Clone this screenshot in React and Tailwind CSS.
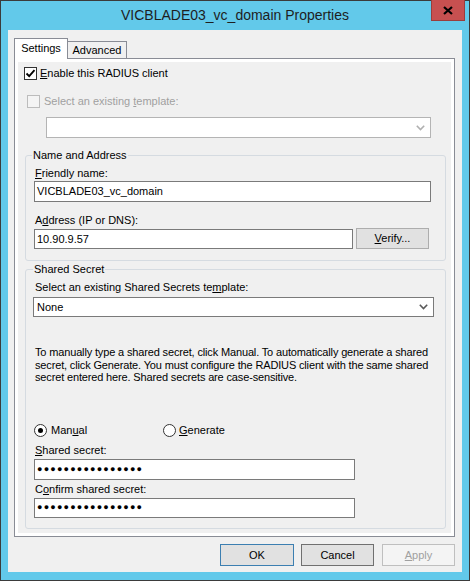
import React from "react";

const Check = ({ checked, disabled }) => (
  <span
    className={`flex h-[13px] w-[13px] shrink-0 items-center justify-center border ${
      disabled ? "border-[#bcbcbc] bg-[#f4f4f4]" : "border-[#333333] bg-white"
    }`}
  >
    {checked && (
      <svg width="11" height="11" viewBox="0 0 11 11">
        <path d="M1.5 5.5 L4.2 8.2 L9.5 2.2" fill="none" stroke="#000" strokeWidth="1.8" />
      </svg>
    )}
  </span>
);

const Radio = ({ checked }) => (
  <span className="flex h-[13px] w-[13px] shrink-0 items-center justify-center rounded-full border border-[#333333] bg-white">
    {checked && <span className="h-[5px] w-[5px] rounded-full bg-black" />}
  </span>
);

const Chevron = ({ color }) => (
  <svg width="9" height="6" viewBox="0 0 9 6">
    <path d="M0.8 0.8 L4.5 4.6 L8.2 0.8" fill="none" stroke={color} strokeWidth="1.6" />
  </svg>
);

const Dots = () => (
  <span className="text-[9px] tracking-[1.2px] text-black">●●●●●●●●●●●●●●●●</span>
);

export default function App() {
  return (
    <div className="flex h-[581px] w-[470px] flex-col border border-[#3b3b3b] bg-[#62c9ea] font-['Liberation_Sans',Arial,sans-serif] text-[11px] leading-[13px] text-black">
      {/* title bar */}
      <div className="relative flex h-[29px] shrink-0 items-center justify-center">
        <span className="text-[14px] text-[#1e1e1e]">VICBLADE03_vc_domain Properties</span>
        <div className="absolute right-[4px] top-[-1px] flex h-[21px] w-[34px] items-center justify-center border border-t-0 border-[#9a3d3d] bg-[#c75050]">
          <svg width="10" height="9" viewBox="0 0 10 9">
            <path d="M1 1 L9 8 M9 1 L1 8" stroke="#000" strokeWidth="2.2" />
          </svg>
        </div>
      </div>

      {/* client area */}
      <div className="mx-[7px] flex h-[542px] flex-col bg-[#f0f0f0] pl-[6px] pr-[7px] pt-[8px]">
        {/* tabs */}
        <div className="flex h-[21px] items-end">
          <div className="relative z-10 flex h-[21px] w-[54px] items-center justify-center border border-b-0 border-[#898c95] bg-white pb-[1px]">
            Settings
          </div>
          <div className="flex h-[18px] w-[59px] items-center justify-center border border-b-0 border-l-0 border-[#898c95] bg-[#f0f0f0]">
            Advanced
          </div>
        </div>

        {/* tab panel */}
        <div className="mt-[-1px] h-[479px] w-[441px] border border-[#898c95] bg-white p-[3px]">
          <div className="flex h-full flex-col bg-[#f0f0f0]">
            <div className="ml-[6px] mt-[5px] flex h-[13px] items-center">
              <Check checked />
              <span className="ml-[3px]">
                <span className="underline">E</span>nable this RADIUS client
              </span>
            </div>

            <div className="ml-[9px] mt-[15px] flex h-[13px] items-center">
              <Check disabled />
              <span className="ml-[4px] text-[#a0a0a0]">
                Select an existing <span className="underline">t</span>emplate:
              </span>
            </div>

            <div className="ml-[28px] mt-[9px] flex h-[21px] w-[385px] items-center justify-end border border-[#b4b4b4] bg-white pr-[5px]">
              <Chevron color="#b0b0b0" />
            </div>

            {/* Name and Address */}
            <div className="relative ml-[7px] mt-[17px] flex h-[106px] w-[421px] flex-col rounded-[3px] border border-[#d5dbe1] pl-[8px]">
              <span className="absolute left-[6px] top-[-7px] bg-[#f0f0f0] px-[1px]">Name and Address</span>
              <span className="ml-[1px] mt-[11px]">
                <span className="underline">F</span>riendly name:
              </span>
              <div className="mt-[1px] flex h-[21px] w-[397px] items-center border border-[#7a7a7a] bg-white pl-[2px]">
                VICBLADE03_vc_domain
              </div>
              <span className="ml-[1px] mt-[12px]">
                A<span className="underline">d</span>dress (IP or DNS):
              </span>
              <div className="mt-[1px] flex items-start">
                <div className="mt-[1px] flex h-[20px] w-[319px] items-center border border-[#7a7a7a] bg-white pl-[2px]">
                  10.90.9.57
                </div>
                <div className="ml-[3px] flex h-[21px] w-[73px] items-center justify-center border border-[#adadad] bg-[#e1e1e1]">
                  <span>
                    <span className="underline">V</span>erify...
                  </span>
                </div>
              </div>
            </div>

            {/* Shared Secret */}
            <div className="relative ml-[7px] mt-[8px] flex h-[260px] w-[421px] flex-col rounded-[3px] border border-[#d5dbe1] pl-[8px]">
              <span className="absolute left-[7px] top-[-7px] bg-[#f0f0f0] px-[1px]">Shared Secret</span>
              <span className="ml-[1px] mt-[11px]">
                Select an existing Shared Secrets te<span className="underline">m</span>plate:
              </span>
              <div className="-ml-[1px] mt-[3px] flex h-[20px] w-[401px] items-center justify-between border border-[#7a7a7a] bg-white pl-[3px] pr-[5px]">
                <span>None</span>
                <Chevron color="#5a5a5a" />
              </div>
              <p className="ml-[1px] mt-[29px] leading-[12.5px] tracking-[-0.15px]">
                To manually type a shared secret, click Manual. To automatically generate a shared
                <br />
                secret, click Generate. You must configure the RADIUS client with the same shared
                <br />
                secret entered here. Shared secrets are case-sensitive.
              </p>
              <div className="mt-[40px] flex h-[13px] items-center">
                <div className="flex w-[129px] items-center">
                  <Radio checked />
                  <span className="ml-[4px]">
                    Man<span className="underline">u</span>al
                  </span>
                </div>
                <div className="flex items-center">
                  <Radio />
                  <span className="ml-[3px]">
                    <span className="underline">G</span>enerate
                  </span>
                </div>
              </div>
              <span className="ml-[1px] mt-[7px]">
                <span className="underline">S</span>hared secret:
              </span>
              <div className="mt-[2px] flex h-[21px] w-[321px] items-center border border-[#7a7a7a] bg-white pl-[2px]">
                <Dots />
              </div>
              <span className="ml-[1px] mt-[3px]">
                C<span className="underline">o</span>nfirm shared secret:
              </span>
              <div className="mt-[2px] flex h-[20px] w-[321px] items-center border border-[#7a7a7a] bg-white pl-[2px]">
                <Dots />
              </div>
            </div>
          </div>
        </div>

        {/* dialog buttons */}
        <div className="mt-[7px] flex justify-end">
          <div className="flex h-[22px] w-[74px] items-center justify-center border border-[#3c7fb1] bg-[#e1e1e1]">
            OK
          </div>
          <div className="ml-[7px] flex h-[22px] w-[73px] items-center justify-center border border-[#707070] bg-[#e1e1e1]">
            Cancel
          </div>
          <div className="ml-[8px] flex h-[22px] w-[73px] items-center justify-center border border-[#bfbfbf] bg-[#f4f4f4] text-[#a0a0a0]">
            <span>
              <span className="underline">A</span>pply
            </span>
          </div>
        </div>
      </div>
    </div>
  );
}
